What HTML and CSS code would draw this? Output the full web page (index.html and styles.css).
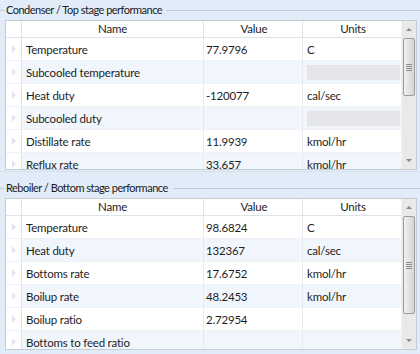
FILE: index.html
```html
<!DOCTYPE html>
<html>
<head>
<meta charset="utf-8">
<link rel="stylesheet" href="styles.css">
</head>
<body>
<div class="page">
  <section class="group">
    <div class="legend"><span class="lead"></span><span class="title">Condenser / Top stage performance</span><span class="rule"></span></div>
    <div class="grid top">
      <div class="table">
        <div class="row head"><div class="rh"></div><div class="c name">Name</div><div class="c value">Value</div><div class="c units">Units</div></div>
        <div class="row"><div class="rh"><i class="tri"></i></div><div class="c name">Temperature</div><div class="c value">77.9796</div><div class="c units">C</div></div>
        <div class="row alt"><div class="rh"><i class="tri"></i></div><div class="c name">Subcooled temperature</div><div class="c value"></div><div class="c units"><span class="na"></span></div></div>
        <div class="row"><div class="rh"><i class="tri"></i></div><div class="c name">Heat duty</div><div class="c value">-120077</div><div class="c units">cal/sec</div></div>
        <div class="row alt"><div class="rh"><i class="tri"></i></div><div class="c name">Subcooled duty</div><div class="c value"></div><div class="c units"><span class="na"></span></div></div>
        <div class="row"><div class="rh"><i class="tri"></i></div><div class="c name">Distillate rate</div><div class="c value">11.9939</div><div class="c units">kmol/hr</div></div>
        <div class="row alt"><div class="rh"><i class="tri"></i></div><div class="c name">Reflux rate</div><div class="c value">33.657</div><div class="c units">kmol/hr</div></div>
      </div>
      <div class="sbar">
        <div class="arrow up"><i></i></div>
        <div class="track"><div class="thumb t1"><span class="grip"></span></div></div>
        <div class="arrow down"><i></i></div>
      </div>
    </div>
  </section>
  <div class="splitter"></div>
  <section class="group">
    <div class="legend"><span class="lead"></span><span class="title">Reboiler / Bottom stage performance</span><span class="rule"></span></div>
    <div class="grid bottom">
      <div class="table">
        <div class="row head"><div class="rh"></div><div class="c name">Name</div><div class="c value">Value</div><div class="c units">Units</div></div>
        <div class="row"><div class="rh"><i class="tri"></i></div><div class="c name">Temperature</div><div class="c value">98.6824</div><div class="c units">C</div></div>
        <div class="row alt"><div class="rh"><i class="tri"></i></div><div class="c name">Heat duty</div><div class="c value">132367</div><div class="c units">cal/sec</div></div>
        <div class="row"><div class="rh"><i class="tri"></i></div><div class="c name">Bottoms rate</div><div class="c value">17.6752</div><div class="c units">kmol/hr</div></div>
        <div class="row alt"><div class="rh"><i class="tri"></i></div><div class="c name">Boilup rate</div><div class="c value">48.2453</div><div class="c units">kmol/hr</div></div>
        <div class="row"><div class="rh"><i class="tri"></i></div><div class="c name">Boilup ratio</div><div class="c value">2.72954</div><div class="c units"></div></div>
        <div class="row alt"><div class="rh"><i class="tri"></i></div><div class="c name">Bottoms to feed ratio</div><div class="c value"></div><div class="c units"></div></div>
      </div>
      <div class="sbar">
        <div class="arrow up"><i></i></div>
        <div class="track"><div class="thumb t2"><span class="grip"></span></div></div>
        <div class="arrow down"><i></i></div>
      </div>
    </div>
  </section>
</div>
</body>
</html>
```
FILE: styles.css
```css
html, body {
  margin: 0;
  padding: 0;
}
body {
  background: #e2ecf8;
  font-family: "Segoe UI", Lato, "Noto Sans", sans-serif;
  font-size: 11.5px;
  letter-spacing: -0.2px;
  color: #1e1e1e;
  width: 420px;
  height: 354px;
  overflow: hidden;
}
.page {
  display: flex;
  flex-direction: column;
  padding-bottom: 5px;
}
.legend {
  display: flex;
  align-items: center;
  height: 20px;
  gap: 2px;
}
.legend .lead {
  width: 4px;
  height: 1px;
  background: #b3cbe5;
}
.legend .title {
  font-size: 11px;
  letter-spacing: -0.5px;
  line-height: 16px;
  padding-bottom: 3px;
  padding-top: 2px;
  color: #1a1a1a;
}
.legend .rule {
  flex: 1;
  height: 1px;
  margin-left: 3px;
  background: #b3cbe5;
}
.grid {
  margin: 0 3px 0 5px;
  display: flex;
  border: 1px solid #c6ccd4;
  background: #fff;
  overflow: hidden;
}
.grid.top { height: 148px; }
.grid.bottom { height: 150px; }
.table {
  flex: 1;
  display: flex;
  flex-direction: column;
  overflow: hidden;
}
.row {
  display: grid;
  grid-template-columns: 16px 182px 99px 100px;
  height: 23px;
  flex: none;
  border-bottom: 1px solid #edf0f4;
  box-sizing: border-box;
}
.row.alt { background: #f1f6fc; }
.row.head {
  height: 17px;
  background: #fff;
  border-bottom: 1px solid #dfe3e8;
}
.row .rh {
  border-right: 1px solid #dfe3e8;
  background: #fff;
  display: flex;
  align-items: center;
  justify-content: center;
}
.tri {
  width: 0;
  height: 0;
  border-left: 4px solid #e2e5e9;
  border-top: 4px solid transparent;
  border-bottom: 4px solid transparent;
}
.c {
  border-right: 1px solid #e6e9ee;
  padding-left: 4px;
  line-height: 23px;
  white-space: nowrap;
  overflow: hidden;
}
.head .c {
  text-align: center;
  padding-left: 0;
  line-height: 16px;
  border-right-color: #dfe3e8;
}
.c.units { border-right: none; }
.c.value { padding-left: 2px; }
.na {
  display: block;
  height: 15px;
  margin: 4px 3px 0 0;
  background: #e4e4e9;
}
.sbar {
  width: 14px;
  flex: none;
  display: flex;
  flex-direction: column;
  background: #e9e9e9;
  border-left: 1px solid #f2f2f2;
}
.arrow {
  height: 17px;
  display: flex;
  align-items: center;
  justify-content: center;
  flex: none;
}
.arrow i {
  width: 0;
  height: 0;
  border-left: 3px solid transparent;
  border-right: 3px solid transparent;
}
.arrow.up i { border-bottom: 3px solid #8a8a8a; }
.arrow.down i { border-top: 3px solid #8a8a8a; }
.track {
  flex: 1;
  display: flex;
  flex-direction: column;
}
.thumb {
  margin: 0 1px;
  border: 1px solid #9c9c9c;
  border-radius: 2px;
  background: linear-gradient(to right, #f0f0f0, #e3e3e3 50%, #d6d6d6);
  display: flex;
  align-items: center;
  justify-content: center;
  box-sizing: border-box;
}
.thumb.t1 { height: 58px; }
.thumb.t2 { height: 98px; }
.grip {
  width: 6px;
  height: 7px;
  background: repeating-linear-gradient(to bottom, #8c8c8c 0 1px, transparent 1px 2px);
}
.splitter {
  height: 6px;
  margin-top: 1px;
  border-top: 1px solid #d4e1ef;
}
```
